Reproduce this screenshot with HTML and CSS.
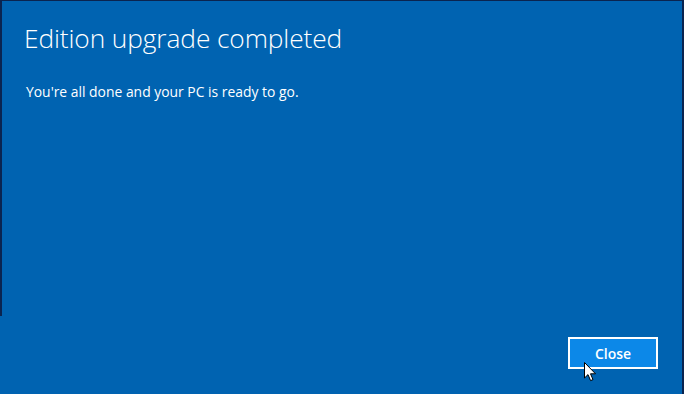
FILE: index.html
```html
<!DOCTYPE html>
<html>
<head>
<meta charset="utf-8">
<link rel="stylesheet" href="styles.css">
</head>
<body>
<div class="screen">
  <div class="window">
    <h1 class="title">Edition upgrade completed</h1>
    <p class="message">You're all done and your PC is ready to go.</p>
  </div>
  <div class="footer">
    <button class="close-btn">Close</button>
  </div>
  <svg class="cursor" width="14" height="20" viewBox="0 0 14 20">
    <path d="M0.5 0.5 L0.5 16 L4 12.6 L6.6 18.6 L9 17.6 L6.5 11.8 L11.5 11.8 Z" fill="#fff" stroke="#000" stroke-width="1"/>
  </svg>
</div>
</body>
</html>
```

FILE: styles.css
```css
html, body {
  margin: 0;
  padding: 0;
  background: #0063b1;
}
.screen {
  position: relative;
  width: 684px;
  height: 394px;
  box-sizing: border-box;
  border-right: 2px solid #0a2450;
  border-top: 1px solid #0a2450;
  display: flex;
  flex-direction: column;
  overflow: hidden;
  font-family: "Open Sans", "Noto Sans", sans-serif;
  color: #fff;
}
.window {
  height: 315px;
  box-sizing: border-box;
  border-left: 2px solid #0a2450;
  padding: 19px 0 0 22px;
}
.title {
  margin: 0;
  font-size: 26.3px;
  font-weight: 300;
  line-height: 36px;
  letter-spacing: -0.1px;
}
.message {
  margin: 26px 0 0 2px;
  font-size: 13.9px;
  line-height: 20px;
}
.footer {
  flex: 1;
  display: flex;
  justify-content: flex-end;
  align-items: flex-start;
  padding: 21px 24px 0 0;
}
.close-btn {
  width: 90px;
  height: 32px;
  box-sizing: border-box;
  border: 2px solid #fff;
  background: #0c88e8;
  color: #fff;
  font-family: "Open Sans", "Noto Sans", sans-serif;
  font-size: 14px;
  font-weight: 600;
  padding: 0;
}
.cursor {
  position: absolute;
  left: 584px;
  top: 361px;
}
```
